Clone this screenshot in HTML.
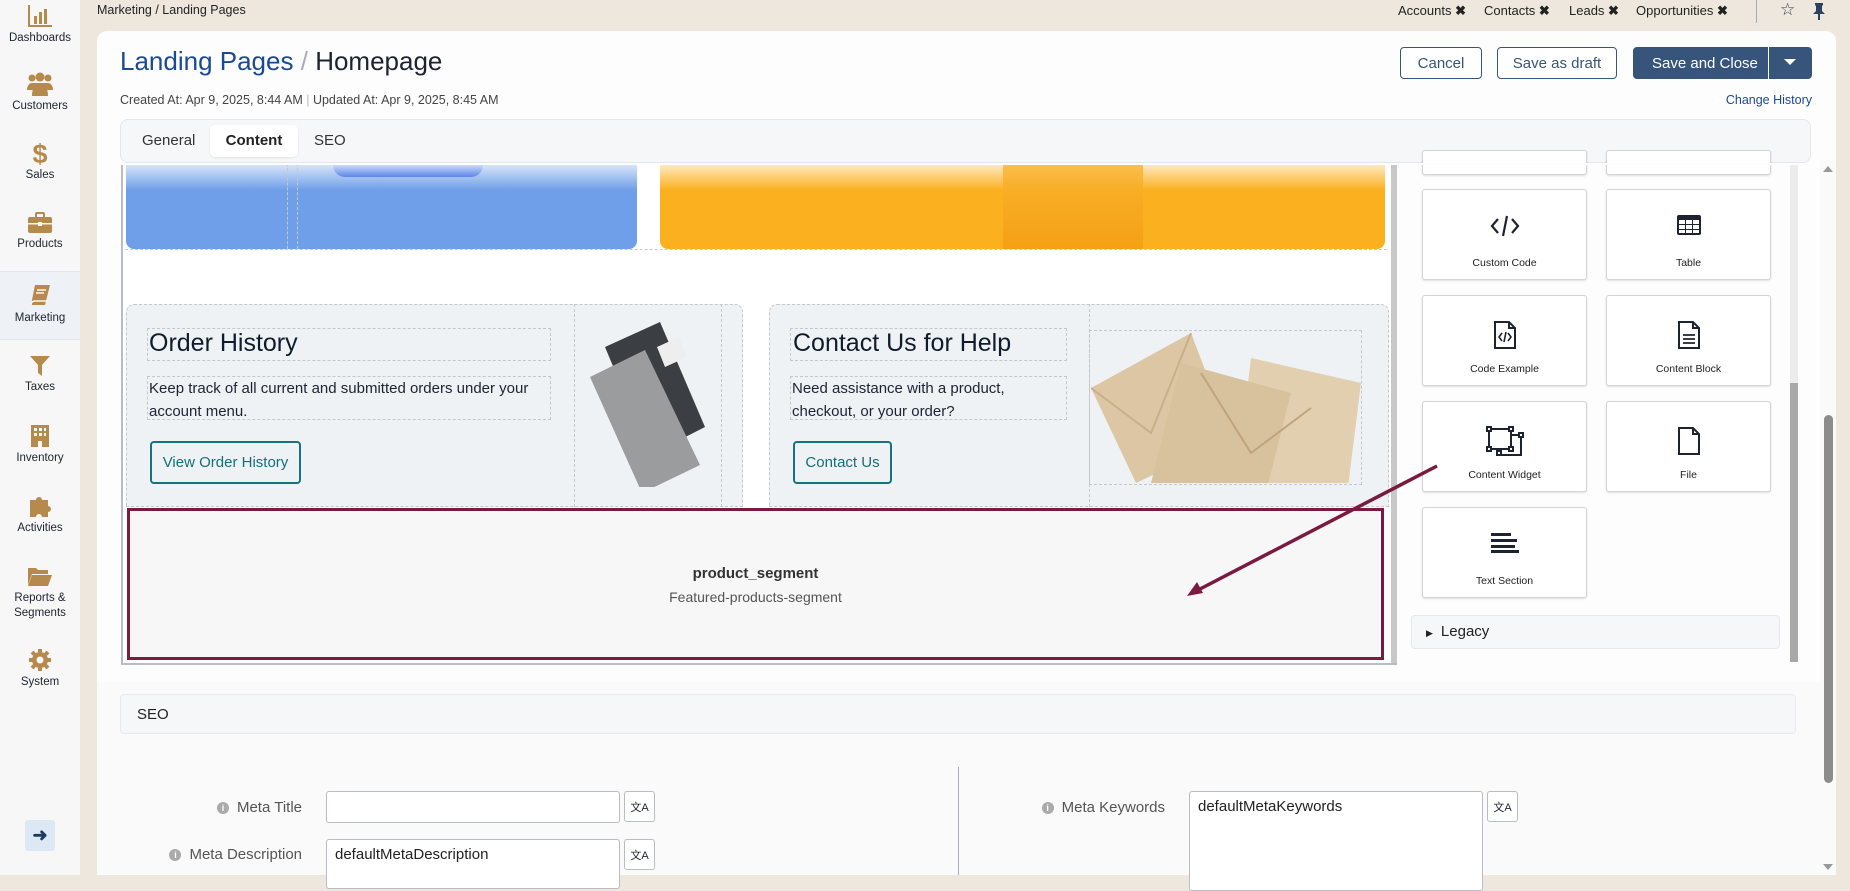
<!DOCTYPE html>
<html><head><meta charset="utf-8">
<style>
*{box-sizing:border-box;margin:0;padding:0}
body{width:1850px;height:875px;overflow:hidden;background:#ede7dd;font-family:"Liberation Sans",sans-serif;color:#1d2330;position:relative}
.a{position:absolute}
.side{left:0;top:0;width:80px;height:875px;background:#f7f7f7}
.si{position:absolute;left:0;width:80px;text-align:center;font-size:11.5px;color:#1d2330}
.si svg{display:block;margin:0 auto 4px}
.card{left:97px;top:31px;width:1739px;height:660px;background:#fdfdfd;border-radius:10px}
.btn{position:absolute;height:32px;border:1px solid #37557a;border-radius:4px;font-size:15px;color:#37557a;display:flex;align-items:center;justify-content:center;background:#fff}
.dash{position:absolute;border:1px dashed #c4c8cc}
.tile{position:absolute;width:165px;height:91px;background:#fff;border:1px solid #d4d4d4;border-radius:3px;box-shadow:0 1px 2px rgba(0,0,0,.12);text-align:center;font-size:10.5px;color:#222}
.tile svg{position:absolute;left:50%;top:24px;transform:translateX(-50%)}
.tile span{position:absolute;left:0;right:0;top:67px}
.lbl{position:absolute;font-size:15px;color:#555;text-align:right}
.inp{position:absolute;background:#fff;border:1px solid #b8bcc4;border-radius:3px;font-size:15px;padding:6px 8px;color:#222}
.tb{position:absolute;width:31px;height:31px;border:1px solid #b8bcc4;border-radius:3px;background:#fff;font-size:11px;display:flex;align-items:center;justify-content:center}
.info{display:inline-block;width:12px;height:12px;border-radius:50%;background:#aaa;color:#fff;font-size:9px;text-align:center;line-height:12px;font-weight:bold;margin-right:8px;vertical-align:1px}
.tt{position:absolute;top:3px;font-size:13px;color:#222;white-space:nowrap}
</style></head><body>

<div class="a side">
 <div class="si" style="top:4px"><svg width="26" height="24" viewBox="0 0 26 24"><path d="M2 1v21h23" stroke="#b58a4c" stroke-width="2" fill="none"/><rect x="7" y="12" width="3" height="8" fill="#b58a4c"/><rect x="12" y="8" width="3" height="12" fill="#b58a4c"/><rect x="17" y="5" width="3" height="15" fill="#b58a4c"/></svg>Dashboards</div>
 <div class="si" style="top:72px"><svg width="28" height="24" viewBox="0 0 28 24"><circle cx="6" cy="6" r="3.5" fill="#b58a4c"/><circle cx="22" cy="6" r="3.5" fill="#b58a4c"/><circle cx="14" cy="5" r="4.5" fill="#b58a4c"/><path d="M1 18c0-5 3-7 5-7h16c2 0 5 2 5 7zM6 24c0-8 3-12 8-12s8 4 8 12z" fill="#b58a4c"/></svg>Customers</div>
 <div class="si" style="top:140px"><div style="font-size:27px;font-weight:bold;color:#b58a4c;line-height:28px;margin-bottom:1px">$</div>Sales</div>
 <div class="si" style="top:212px"><svg width="26" height="22" viewBox="0 0 26 22"><rect x="1" y="5" width="24" height="16" rx="2" fill="#b58a4c"/><rect x="9" y="1" width="8" height="5" rx="1" fill="none" stroke="#b58a4c" stroke-width="2"/><rect x="1" y="11" width="24" height="1.5" fill="#f7f7f7"/><rect x="11" y="10" width="4" height="4" fill="#f7f7f7"/></svg>Products</div>
 <div class="a" style="left:0;top:271px;width:80px;height:69px;background:#eef1f6;border-top:1px solid #e2e5ea;border-bottom:1px solid #e2e5ea"></div>
 <div class="si" style="top:284px"><svg width="24" height="24" viewBox="0 0 24 24"><path d="M7 1h15l-5 20H3z" fill="#b58a4c"/><path d="M3 21c0-3 2-4 4-4h13" stroke="#f7f7f7" stroke-width="1.5" fill="none"/><path d="M9 6h9M8 9h8" stroke="#f7f7f7" stroke-width="1.4"/></svg>Marketing</div>
 <div class="si" style="top:355px"><svg width="22" height="22" viewBox="0 0 22 22"><path d="M1 1h20l-8 9v11l-4-3v-8z" fill="#b58a4c"/></svg>Taxes</div>
 <div class="si" style="top:424px"><svg width="20" height="24" viewBox="0 0 20 24"><rect x="1" y="1" width="18" height="22" fill="#b58a4c"/><g fill="#f7f7f7"><rect x="4" y="4" width="3" height="3"/><rect x="9" y="4" width="3" height="3"/><rect x="14" y="4" width="2" height="3"/><rect x="4" y="9" width="3" height="3"/><rect x="9" y="9" width="3" height="3"/><rect x="14" y="9" width="2" height="3"/><rect x="8" y="17" width="4" height="6"/></g></svg>Inventory</div>
 <div class="si" style="top:494px"><svg width="24" height="24" viewBox="0 0 24 24"><path d="M2 6h6a3 3 0 1 1 6 0h6v6a3 3 0 1 1 0 6v5H14a3 3 0 1 0-6 0H2z" fill="#b58a4c"/></svg>Activities</div>
 <div class="si" style="top:565px;line-height:15px"><svg width="26" height="22" viewBox="0 0 26 22"><path d="M1 3h8l2 2h10v4H5L1 20z" fill="#b58a4c"/><path d="M5 10h20l-4 11H1z" fill="#b58a4c"/></svg>Reports &amp;<br>Segments</div>
 <div class="si" style="top:648px"><svg width="24" height="24" viewBox="0 0 24 24"><circle cx="12" cy="12" r="8" fill="#b58a4c"/><g stroke="#b58a4c" stroke-width="4"><path d="M12 1v22M1 12h22M4 4l16 16M20 4L4 20"/></g><circle cx="12" cy="12" r="3.5" fill="#f7f7f7"/></svg>System</div>
 <div class="a" style="left:25px;top:820px;width:30px;height:31px;background:#dde8f5;border-radius:3px;font-size:18px;font-weight:bold;color:#1f3a5c;text-align:center;line-height:30px">&#10140;</div>
</div>

<div class="a" style="left:97px;top:3px;font-size:12.5px;color:#222">Marketing / Landing Pages</div>
<div class="tt" style="left:1398px">Accounts <b>✖</b></div>
<div class="tt" style="left:1484px">Contacts <b>✖</b></div>
<div class="tt" style="left:1569px">Leads <b>✖</b></div>
<div class="tt" style="left:1636px">Opportunities <b>✖</b></div>
<div class="a" style="left:1756px;top:0;width:1px;height:23px;background:#aab"></div>
<div class="a" style="left:1780px;top:0;font-size:17px;color:#2b4160">☆</div>
<svg class="a" style="left:1812px;top:2px" width="14" height="18" viewBox="0 0 14 18"><path d="M3 1h8v2l-1 1v5l3 3H1l3-3V4L3 3z M6 12h2v6H6z" fill="#2b4160"/></svg>

<div class="a card"></div>
<div class="a" style="left:120px;top:46px;font-size:26px;color:#1a4a94">Landing Pages <span style="color:#aab">/</span> <span style="color:#1d2330">Homepage</span></div>
<div class="a" style="left:120px;top:93px;font-size:12.5px;color:#444">Created At: Apr 9, 2025, 8:44 AM <span style="color:#bbb">|</span> Updated At: Apr 9, 2025, 8:45 AM</div>
<div class="btn" style="left:1400px;top:47px;width:82px">Cancel</div>
<div class="btn" style="left:1497px;top:47px;width:120px">Save as draft</div>
<div class="btn" style="left:1633px;top:47px;width:179px;background:#37557a;color:#fff;justify-content:flex-start;padding-left:18px">Save and Close</div>
<div class="a" style="left:1768px;top:47px;width:1px;height:32px;background:#fff"></div>
<div class="a" style="left:1784px;top:59px;width:0;height:0;border-left:6px solid transparent;border-right:6px solid transparent;border-top:6px solid #fff"></div>
<div class="a" style="left:1700px;top:93px;width:112px;text-align:right;font-size:12.5px;color:#1a4a94">Change History</div>

<div class="a" style="left:120px;top:119px;width:1691px;height:44px;background:#f6f7f9;border:1px solid #e4e6ea;border-radius:8px"></div>
<div class="a" style="left:142px;top:132px;font-size:15px;color:#333">General</div>
<div class="a" style="left:210px;top:125px;width:88px;height:32px;background:#fff;border-radius:5px;box-shadow:0 1px 2px rgba(0,0,0,.08);font-size:15px;font-weight:bold;color:#222;text-align:center;line-height:32px">Content</div>
<div class="a" style="left:314px;top:132px;font-size:15px;color:#333">SEO</div>

<!-- canvas -->
<div class="a" style="left:121px;top:165px;width:1276px;height:500px;background:#fff;border-left:2px solid #b8bcc6;border-bottom:2px solid #b8bcc6;overflow:hidden">
 <div class="a" style="left:3px;top:-10px;width:511px;height:94px;border-radius:8px;background:linear-gradient(#fff 0,#6f9fe8 35px)"></div>
 <div class="a" style="left:210px;top:0;width:150px;height:12px;background:linear-gradient(#c8d6f8,#3a6ae8);border-radius:0 0 30px 30px;opacity:.7"></div>
 <div class="a" style="left:537px;top:-10px;width:725px;height:94px;border-radius:8px;background:linear-gradient(#fff 0,#fbb01f 35px)"></div>
 <div class="a" style="left:880px;top:0;width:140px;height:84px;background:linear-gradient(#f9b431,#f29d12);opacity:.8"></div>
 <div class="dash" style="left:164px;top:-2px;width:0;height:86px;border-width:0 0 0 1px"></div>
 <div class="dash" style="left:174px;top:-2px;width:0;height:86px;border-width:0 0 0 1px"></div>
 <div class="dash" style="left:2px;top:84px;width:1262px;height:0;border-width:1px 0 0 0"></div>
 <!-- order card -->
 <div class="a" style="left:3px;top:139px;width:617px;height:203px;background:#eef2f5;border:1px dashed #c4c8cc;border-radius:8px 8px 0 0"></div>
 <div class="dash" style="left:451px;top:139px;height:203px;width:0;border-width:0 0 0 1px"></div>
 <div class="dash" style="left:598px;top:139px;height:203px;width:0;border-width:0 0 0 1px"></div>
 <div class="dash" style="left:24px;top:163px;width:404px;height:33px"></div>
 <div class="a" style="left:26px;top:164px;font-size:25px;color:#0f1c2c">Order History</div>
 <div class="dash" style="left:24px;top:211px;width:404px;height:44px"></div>
 <div class="a" style="left:26px;top:212px;font-size:15px;line-height:23px;color:#1d2330;width:400px">Keep track of all current and submitted orders under your account menu.</div>
 <div class="a" style="left:27px;top:276px;width:151px;height:43px;border:2px solid #16737d;border-radius:4px;color:#12707a;font-size:15px;text-align:center;line-height:39px">View Order History</div>
 <svg class="a" style="left:462px;top:152px" width="130" height="170" viewBox="0 0 130 170"><path d="M20 30L75 5l45 105-55 28z" fill="#3b3e42"/><path d="M5 60l55-27 55 115-58 28z" fill="#9b9c9e"/><path d="M72 30l22-10 8 20-22 10z" fill="#eee"/></svg>
 <!-- contact card -->
 <div class="a" style="left:646px;top:139px;width:620px;height:203px;background:#eef2f5;border:1px dashed #c4c8cc;border-radius:8px 8px 0 0"></div>
 <div class="dash" style="left:966px;top:139px;height:203px;width:0;border-width:0 0 0 1px"></div>
 <div class="dash" style="left:667px;top:163px;width:277px;height:33px"></div>
 <div class="a" style="left:670px;top:164px;font-size:25px;color:#0f1c2c">Contact Us for Help</div>
 <div class="dash" style="left:667px;top:211px;width:277px;height:44px"></div>
 <div class="a" style="left:669px;top:212px;font-size:15px;line-height:23px;color:#1d2330;width:275px">Need assistance with a product, checkout, or your order?</div>
 <div class="a" style="left:670px;top:276px;width:99px;height:43px;border:2px solid #16737d;border-radius:4px;color:#12707a;font-size:15px;text-align:center;line-height:39px">Contact Us</div>
 <div class="dash" style="left:966px;top:165px;width:273px;height:155px"></div>
 <svg class="a" style="left:968px;top:168px" width="270" height="150" viewBox="0 0 270 150"><path d="M0 55L100 0l40 105-95 45z" fill="#dcc6a4"/><path d="M0 55l60 45 40-100" fill="none" stroke="#c9b08a" stroke-width="2"/><path d="M160 25l110 25-15 120-110-20z" fill="#e2cfb0"/><path d="M90 70l110 30-30 120-110-30z" fill="#d8c29e" transform="translate(0,-40)"/><path d="M110 40l50 80 60-45" fill="none" stroke="#bfa47c" stroke-width="2"/></svg>
 <!-- segment -->
 <div class="a" style="left:4px;top:343px;width:1257px;height:152px;background:#f7f7f7;border:3px solid #7a1a3e"></div>
 <div class="a" style="left:4px;top:400px;width:1257px;text-align:center;font-size:15px;font-weight:bold;color:#333">product_segment</div>
 <div class="a" style="left:4px;top:424px;width:1257px;text-align:center;font-size:14px;color:#555">Featured-products-segment</div>
 <div class="a" style="left:1268px;top:0;width:8px;height:500px;background:#c8c8c8"></div>
</div>

<!-- right panel -->
<div class="tile" style="left:1422px;top:150px;height:25px"></div>
<div class="tile" style="left:1606px;top:150px;height:25px"></div>
<div class="a" style="left:1400px;top:163px;width:420px;height:2px;background:#fdfdfd"></div>
<div class="tile" style="left:1422px;top:189px"><svg width="30" height="24" viewBox="0 0 30 24"><path d="M8 5L2 12l6 7M22 5l6 7-6 7M17 2l-4 20" stroke="#1d2330" stroke-width="2.2" fill="none"/></svg><span>Custom Code</span></div>
<div class="tile" style="left:1606px;top:189px"><svg width="26" height="22" viewBox="0 0 26 22"><rect x="1" y="1" width="24" height="20" rx="2" fill="#1d2330"/><g fill="#fff"><rect x="3" y="6" width="6" height="4"/><rect x="10" y="6" width="6" height="4"/><rect x="17" y="6" width="6" height="4"/><rect x="3" y="11" width="6" height="4"/><rect x="10" y="11" width="6" height="4"/><rect x="17" y="11" width="6" height="4"/><rect x="3" y="16" width="6" height="3"/><rect x="10" y="16" width="6" height="3"/><rect x="17" y="16" width="6" height="3"/></g></svg><span>Table</span></div>
<div class="tile" style="left:1422px;top:295px"><svg width="24" height="30" viewBox="0 0 24 30"><path d="M2 2h14l6 6v20H2z M16 2v6h6" stroke="#1d2330" stroke-width="2" fill="none"/><path d="M9 13l-3 4 3 4M15 13l3 4-3 4M13 12l-2 10" stroke="#1d2330" stroke-width="1.6" fill="none"/></svg><span>Code Example</span></div>
<div class="tile" style="left:1606px;top:295px"><svg width="24" height="30" viewBox="0 0 24 30"><path d="M2 2h14l6 6v20H2z M16 2v6h6" stroke="#1d2330" stroke-width="2" fill="none"/><path d="M6 15h12M6 19h12M6 23h12" stroke="#1d2330" stroke-width="1.8"/></svg><span>Content Block</span></div>
<div class="tile" style="left:1422px;top:401px"><svg width="38" height="30" viewBox="0 0 38 30"><g stroke="#1d2330" stroke-width="2" fill="none"><path d="M3 3h22v20H3zM25 9h10v20H13v-6"/><rect x="1" y="1" width="4" height="4" fill="#fff"/><rect x="23" y="1" width="4" height="4" fill="#fff"/><rect x="1" y="21" width="4" height="4" fill="#fff"/><rect x="23" y="21" width="4" height="4" fill="#fff"/><rect x="33" y="7" width="4" height="4" fill="#fff"/><rect x="11" y="25" width="4" height="4" fill="#fff"/></g></svg><span>Content Widget</span></div>
<div class="tile" style="left:1606px;top:401px"><svg width="24" height="30" viewBox="0 0 24 30"><path d="M2 2h14l6 6v20H2z M16 2v6h6" stroke="#1d2330" stroke-width="2" fill="none"/></svg><span>File</span></div>
<div class="tile" style="left:1422px;top:507px"><svg width="30" height="22" viewBox="0 0 30 22"><g fill="#1d2330"><rect x="1" y="1" width="20" height="3"/><rect x="1" y="7" width="26" height="3"/><rect x="1" y="13" width="24" height="3"/><rect x="1" y="18" width="28" height="3"/></g></svg><span>Text Section</span></div>
<div class="a" style="left:1411px;top:615px;width:369px;height:34px;background:#f6f7f9;border:1px solid #e6e8eb;border-radius:4px;font-size:15px;color:#222;padding:7px 0 0 14px"><span style="font-size:9px;margin-right:8px">&#9654;</span>Legacy</div>
<div class="a" style="left:1790px;top:165px;width:8px;height:218px;background:#ececec"></div>
<div class="a" style="left:1790px;top:383px;width:8px;height:279px;background:#a8a8a8"></div>

<!-- arrow -->
<svg class="a" style="left:0;top:0" width="1850" height="875"><line x1="1437" y1="466" x2="1200" y2="589" stroke="#7a1a3e" stroke-width="3.5"/><path d="M1187 596l10-14 6 11z" fill="#7a1a3e"/></svg>

<!-- page scrollbar -->
<div class="a" style="left:1820px;top:160px;width:16px;height:715px;background:#fafafa"></div>
<div class="a" style="left:1823px;top:166px;width:0;height:0;border-left:5px solid transparent;border-right:5px solid transparent;border-bottom:6px solid #999"></div>
<div class="a" style="left:1824px;top:415px;width:9px;height:368px;background:#8c8c8c;border-radius:5px"></div>
<div class="a" style="left:1823px;top:864px;width:0;height:0;border-left:5px solid transparent;border-right:5px solid transparent;border-top:6px solid #999"></div>

<!-- lower -->
<div class="a" style="left:97px;top:682px;width:1723px;height:193px;background:#fafafa"></div>
<div class="a" style="left:120px;top:694px;width:1676px;height:40px;background:#f6f7f9;border:1px solid #e8eaed;border-radius:4px;font-size:15px;color:#222;padding:11px 0 0 16px">SEO</div>
<div class="lbl" style="left:150px;top:799px;width:152px"><span class="info">i</span>Meta Title</div>
<div class="inp" style="left:326px;top:791px;width:294px;height:32px"></div>
<div class="tb" style="left:624px;top:791px">文A</div>
<div class="lbl" style="left:100px;top:846px;width:202px"><span class="info">i</span>Meta Description</div>
<div class="inp" style="left:326px;top:839px;width:294px;height:50px">defaultMetaDescription</div>
<div class="tb" style="left:624px;top:839px">文A</div>
<div class="a" style="left:958px;top:767px;width:1px;height:108px;background:#aab"></div>
<div class="lbl" style="left:1000px;top:799px;width:165px"><span class="info">i</span>Meta Keywords</div>
<div class="inp" style="left:1189px;top:791px;width:294px;height:100px">defaultMetaKeywords</div>
<div class="tb" style="left:1487px;top:791px">文A</div>
</body></html>
